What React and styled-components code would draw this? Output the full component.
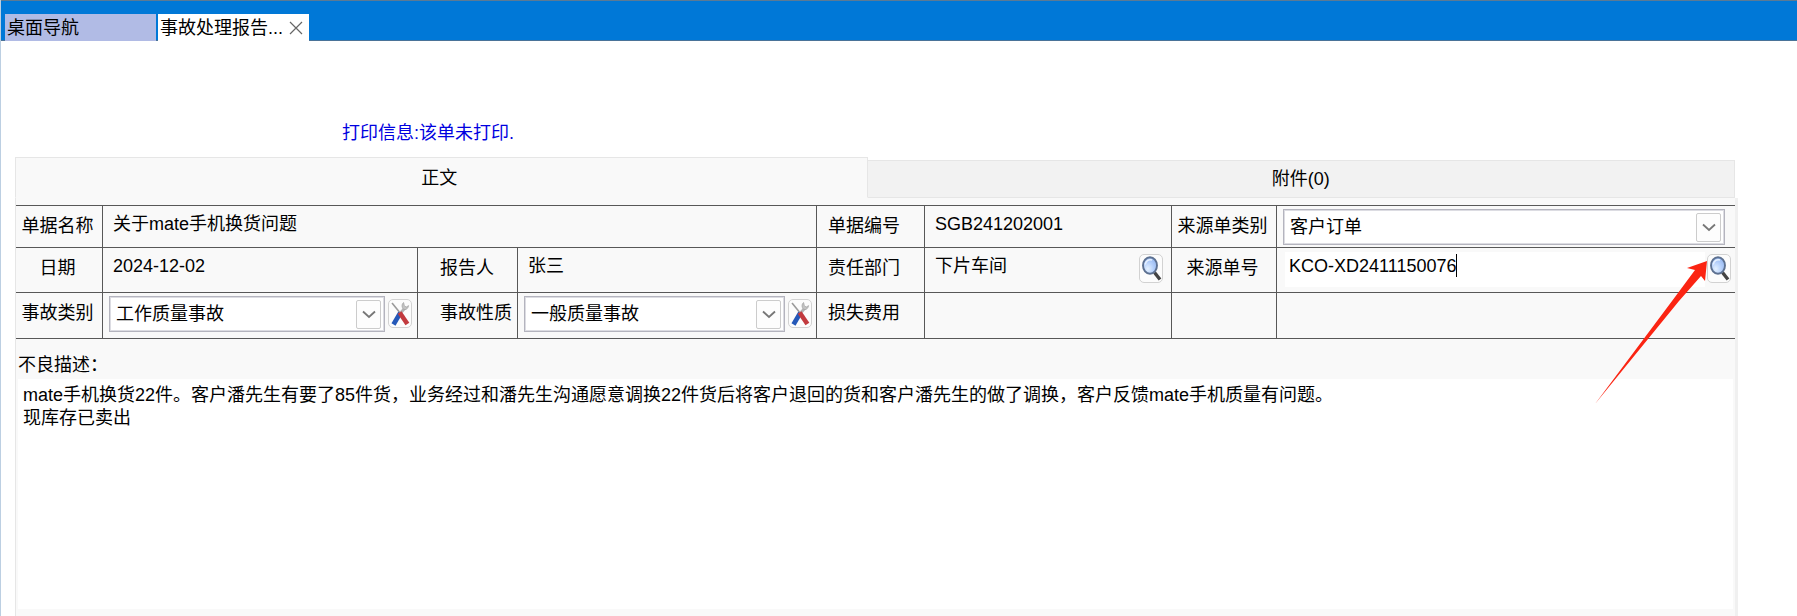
import React from "react";
import styled, { createGlobalStyle } from "styled-components";

const LINE = "#585858";

const GlobalStyle = createGlobalStyle`
  * { box-sizing: border-box; }
  body {
    margin: 0;
    background: #fff;
    color: #000;
    font: 18px/24px "Liberation Sans", "Noto Sans CJK SC", sans-serif;
  }
  button, input, select, textarea {
    font: inherit;
    color: inherit;
    margin: 0;
    padding: 0;
    border: 0;
    border-radius: 0;
    background: none;
    outline: 0;
  }
`;

const Page = styled.div`
  position: relative;
  min-height: 100vh;
  border-left: 1px solid #bccfe2;
  overflow: hidden;
`;

const WindowBar = styled.nav`
  display: flex;
  align-items: flex-end;
  gap: 2px;
  height: 41px;
  padding-left: 4px;
  background: #0078d7;
  border-top: 1px solid #5c7a94;
  box-shadow: inset 0 -1px #4a7398;
`;

const WindowTab = styled.div`
  display: flex;
  align-items: center;
  width: 151px;
  height: 27px;
  padding: 0 4px 0 2px;
  background: ${(p) => (p.$active ? "#fff" : "#b1bbe5")};
`;

const TabButton = styled.button`
  flex: 1;
  text-align: left;
  white-space: nowrap;
  line-height: 24px;
`;

const CloseButton = styled.button`
  display: flex;
  padding: 2px;
`;

const PrintInfo = styled.p`
  margin: 80px 0 0 341px;
  color: #0000e0;
`;

const Panel = styled.main`
  margin: 12px 59px 0 14px;
`;

const TabList = styled.div`
  display: flex;
  align-items: flex-end;
  padding-right: 3px;
`;

const PanelTab = styled.button`
  flex: ${(p) => (p.$active ? "850 1 0" : "870 1 0")};
  height: ${(p) => (p.$active ? 41 : 38)}px;
  padding-right: ${(p) => (p.$active ? 4 : 0)}px;
  background: ${(p) => (p.$active ? "#f9f9f9" : "#f2f2f2")};
  border: 1px solid #e6e6e6;
  border-bottom-color: ${(p) => (p.$active ? "#f9f9f9" : "#e6e6e6")};
  border-left-width: ${(p) => (p.$active ? 1 : 0)}px;
`;

const PanelBody = styled.div`
  padding-top: 7px;
  background: #f9f9f9;
  border-left: 1px solid #e6e6e6;
  border-right: 3px solid #f0f0f0;
`;

const FormGrid = styled.form`
  display: grid;
  grid-template-columns: 86px 315fr 100px 299fr 108px 247fr 105px 459fr;
  grid-template-rows: 42px 45px 46px;
  border-bottom: 1px solid ${LINE};
`;

const Cell = styled.div`
  display: flex;
  align-items: flex-start;
  min-width: 0;
  grid-column: span ${(p) => p.$span || 1};
  padding-right: ${(p) => p.$right || 0}px;
  border-top: 1px solid ${LINE};
  border-left: ${(p) => (p.$first ? 0 : 1)}px solid ${LINE};
`;

const LabelCell = styled(Cell)`
  justify-content: ${(p) => (p.$indent ? "flex-start" : "center")};
  padding: 8px ${(p) => (p.$indent ? 0 : 3)}px 0 ${(p) => p.$indent || 0}px;
  white-space: nowrap;
`;

const TextInput = styled.input`
  flex: 1;
  min-width: 0;
  height: 24px;
  margin-top: 6px;
  padding-left: 10px;
`;

const ActiveField = styled.div`
  display: flex;
  flex: 1;
  align-items: flex-start;
  min-width: 0;
  height: 35px;
  margin: 4px 2px 0 8px;
  padding: 2px 0 0 4px;
  background: #fff;
`;

const ActiveInput = styled.input`
  field-sizing: content;
  height: 24px;
`;

const Caret = styled.span`
  width: 1px;
  height: 23px;
  background: #000;
`;

const SelectFrame = styled.div`
  display: flex;
  flex: 1;
  align-items: center;
  min-width: 0;
  height: 36px;
  margin: 3px 0 0 6px;
  padding: 0 3px 0 0;
  background: #fff;
  border: 1px solid #b4b4be;
  box-shadow: inset 0 0 0 1px #dcdce2;
`;

const NativeSelect = styled.select`
  flex: 1;
  min-width: 0;
  height: 32px;
  padding-left: 6px;
  appearance: none;
`;

const ChevronBox = styled.span`
  display: flex;
  align-items: center;
  justify-content: center;
  width: 25px;
  height: 29px;
  background: #fdfdfd;
  border: 1px solid #ccc;
  border-radius: 2px;
  pointer-events: none;
`;

const IconButton = styled.button`
  display: flex;
  align-items: center;
  justify-content: center;
  flex: none;
  width: 24px;
  height: 29px;
  margin-top: 6px;
  background: #fcfcfc;
  border: 1px solid #d2d2d2;
  border-radius: 5px;
`;

const ToolsButton = styled(IconButton)`
  margin-left: 3px;
`;

const Description = styled.section`
  display: flex;
  flex-direction: column;
  padding: 14px 2px 7px 2px;
`;

const DescriptionText = styled.textarea`
  height: 230px;
  margin-top: 2px;
  padding: 5px;
  background: #fff;
  line-height: 23px;
  resize: none;
`;

const Pointer = styled.svg`
  position: absolute;
  top: 261px;
  right: 90px;
  pointer-events: none;
`;

const CloseIcon = () => (
  <svg width="14" height="14" viewBox="0 0 14 14" aria-hidden="true">
    <path d="M1 1 13 13M13 1 1 13" stroke="#666" strokeWidth="1.2" fill="none" />
  </svg>
);

const Chevron = () => (
  <svg width="14" height="9" viewBox="0 0 14 9" aria-hidden="true">
    <path d="M1 1.5 7 7 13 1.5" stroke="#777" strokeWidth="1.8" fill="none" />
  </svg>
);

const SearchIcon = () => (
  <svg width="22" height="27" viewBox="0 0 22 27" aria-hidden="true">
    <defs>
      <radialGradient id="lens" cx="0.35" cy="0.7" r="0.8">
        <stop offset="0" stopColor="#e4f1ff" />
        <stop offset="0.5" stopColor="#b5d0fb" />
        <stop offset="1" stopColor="#8fb2ee" />
      </radialGradient>
    </defs>
    <path d="M14.5 17.5 20 24.5" stroke="#444" strokeWidth="3.4" />
    <ellipse cx="10" cy="10.5" rx="7" ry="8.3" fill="url(#lens)" stroke="#5d7191" strokeWidth="1.9" />
    <path d="M5.2 9.5C6 5.5 9 4 12 5" stroke="#e8f2ff" strokeWidth="1.4" fill="none" />
  </svg>
);

const ToolsIcon = () => (
  <svg width="22" height="27" viewBox="0 0 22 27" aria-hidden="true">
    <path d="M3 3 12 14" stroke="#9a9a9a" strokeWidth="1.6" />
    <path d="M11 13.5 17 7" stroke="#b4b4b4" strokeWidth="3" />
    <path d="M14.6 2.5C12.5 4 12.5 7.5 14.6 9.2 17 10.3 19.3 8.5 19.6 5.6L17 7.2 15.3 5.4Z" fill="#c4c4c4" stroke="#999" strokeWidth="0.6" />
    <path d="M11.2 13 4.5 24.5" stroke="#2458b8" strokeWidth="4.6" />
    <path d="M10.6 12.5 18.4 24" stroke="#c23a3e" strokeWidth="4.6" />
  </svg>
);

function FieldLabel({ id, first, indent, children }) {
  return (
    <LabelCell $first={first} $indent={indent}>
      <label htmlFor={id}>{children}</label>
    </LabelCell>
  );
}

function Field({ id, label, value, span, first, indent, right, children }) {
  return (
    <>
      <FieldLabel id={id} first={first} indent={indent}>
        {label}
      </FieldLabel>
      <Cell $span={span} $right={right}>
        <TextInput id={id} defaultValue={value} />
        {children}
      </Cell>
    </>
  );
}

function SelectField({ id, label, value, first, indent, right, children }) {
  return (
    <>
      <FieldLabel id={id} first={first} indent={indent}>
        {label}
      </FieldLabel>
      <Cell $right={right}>
        <SelectFrame>
          <NativeSelect id={id} defaultValue={value}>
            <option>{value}</option>
          </NativeSelect>
          <ChevronBox>
            <Chevron />
          </ChevronBox>
        </SelectFrame>
        {children}
      </Cell>
    </>
  );
}

export default function App() {
  return (
    <Page>
      <GlobalStyle />
      <WindowBar>
        <WindowTab>
          <TabButton type="button">桌面导航</TabButton>
        </WindowTab>
        <WindowTab $active>
          <TabButton type="button">事故处理报告...</TabButton>
          <CloseButton type="button" aria-label="关闭">
            <CloseIcon />
          </CloseButton>
        </WindowTab>
      </WindowBar>

      <PrintInfo>打印信息:该单未打印.</PrintInfo>

      <Panel>
        <TabList role="tablist">
          <PanelTab type="button" role="tab" aria-selected="true" $active>
            正文
          </PanelTab>
          <PanelTab type="button" role="tab" aria-selected="false">
            附件(0)
          </PanelTab>
        </TabList>

        <PanelBody>
          <FormGrid>
            <Field id="name" label="单据名称" value="关于mate手机换货问题" span={3} first />
            <Field id="number" label="单据编号" value="SGB241202001" indent={11} />
            <SelectField id="sourceType" label="来源单类别" value="客户订单" right={10} />

            <Field id="date" label="日期" value="2024-12-02" first />
            <Field id="reporter" label="报告人" value="张三" indent={22} />
            <Field id="department" label="责任部门" value="下片车间" indent={11} right={8}>
              <IconButton type="button" aria-label="查找部门">
                <SearchIcon />
              </IconButton>
            </Field>
            <FieldLabel id="sourceNumber">来源单号</FieldLabel>
            <Cell $right={4}>
              <ActiveField>
                <ActiveInput id="sourceNumber" defaultValue="KCO-XD2411150076" />
                <Caret />
              </ActiveField>
              <IconButton type="button" aria-label="查找来源单">
                <SearchIcon />
              </IconButton>
            </Cell>

            <SelectField id="category" label="事故类别" value="工作质量事故" first right={5}>
              <ToolsButton type="button" aria-label="设置事故类别">
                <ToolsIcon />
              </ToolsButton>
            </SelectField>
            <SelectField id="severity" label="事故性质" value="一般质量事故" indent={22} right={4}>
              <ToolsButton type="button" aria-label="设置事故性质">
                <ToolsIcon />
              </ToolsButton>
            </SelectField>
            <Field id="cost" label="损失费用" value="" indent={11} />
            <Cell />
            <Cell />
          </FormGrid>

          <Description>
            <label htmlFor="description">不良描述：</label>
            <DescriptionText
              id="description"
              spellCheck={false}
              defaultValue={
                "mate手机换货22件。客户潘先生有要了85件货，业务经过和潘先生沟通愿意调换22件货后将客户退回的货和客户潘先生的做了调换，客户反馈mate手机质量有问题。\n现库存已卖出"
              }
            />
          </Description>
        </PanelBody>
      </Panel>

      <Pointer width="112" height="143" viewBox="0 0 112 143" aria-hidden="true">
        <path d="M112 0 92 7 100 9 80 36 0 143 84 40 106 15 110 20Z" fill="#fb2412" />
      </Pointer>
    </Page>
  );
}
